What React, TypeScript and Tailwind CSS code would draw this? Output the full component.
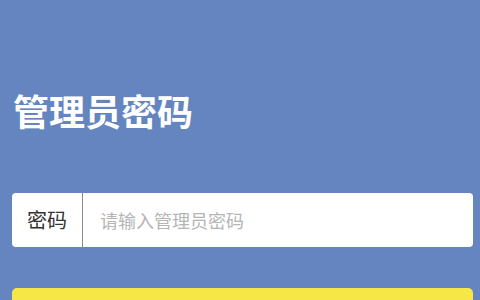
export default function App() {
  return (
    <div
      className="w-[480px] h-[300px] overflow-hidden bg-[#6585c0] flex flex-col pl-3 pr-[7px]"
      style={{ fontFamily: '"Noto Sans CJK SC", "Noto Sans", sans-serif' }}
    >
      <h1 className="shrink-0 mt-[90px] text-[36px] leading-[40px] font-bold text-white pl-[1px]">管理员密码</h1>
      <div className="shrink-0 mt-[63px] h-[54px] bg-white rounded-[4px] flex items-center">
        <div className="w-[71px] h-full flex items-center justify-center border-r border-[#8a8a8a] text-[20px] text-[#333]">
          密码
        </div>
        <div className="pl-[17px] text-[18px] text-[#b5b5b5]">请输入管理员密码</div>
      </div>
      <div className="shrink-0 mt-[41px] h-[40px] bg-[#f6e646] rounded-[5px]" />
    </div>
  );
}
